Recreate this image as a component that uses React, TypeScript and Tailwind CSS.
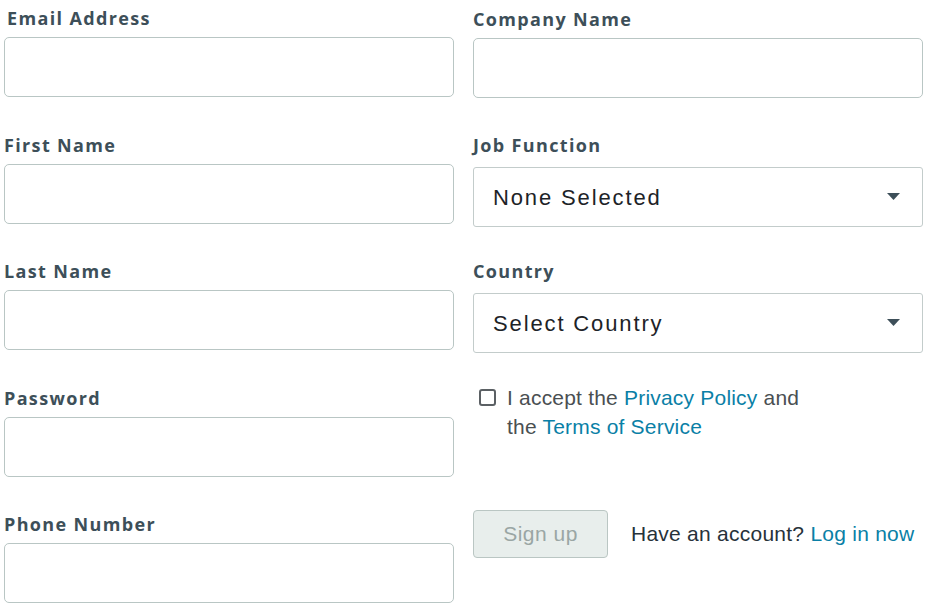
import React from "react";

const labelCls =
  "block text-[18px] leading-[26px] font-bold text-[#3d4f59] tracking-[0.075em]";
const inputCls =
  "block w-full h-[60px] rounded-[5px] border border-[#b9c6c4] bg-white";
const labelFont = { fontFamily: "'Open Sans', Lato, sans-serif" };

function Field({ label, className = "" }: { label: string; className?: string }) {
  return (
    <div className={className}>
      <label className={labelCls} style={labelFont}>
        {label}
      </label>
      <div className={"mt-[6px] " + inputCls} />
    </div>
  );
}

function SelectField({ label, value, className = "" }: { label: string; value: string; className?: string }) {
  return (
    <div className={className}>
      <label className={labelCls} style={labelFont}>
        {label}
      </label>
      <div className="mt-[9px] flex h-[60px] w-full items-center justify-between rounded-[3px] border border-[#c3cccb] bg-white pl-[19px] pr-[22px]">
        <span className="text-[22px] tracking-[0.085em] text-[#1d2327]" style={{ fontFamily: "'Liberation Sans', Arial, sans-serif" }}>
          {value}
        </span>
        <svg width="13" height="8" viewBox="0 0 13 8">
          <path d="M0 0 H13 L6.5 7 Z" fill="#3d4f59" />
        </svg>
      </div>
    </div>
  );
}

export default function App() {
  const body = { fontFamily: "'Liberation Sans', Arial, sans-serif" };
  return (
    <div className="w-[932px] h-[614px] bg-white overflow-hidden">
      <div className="grid grid-cols-[450px_450px] gap-x-[19px] pl-[4px] pt-[5px]">
        <div className="flex flex-col gap-[34.5px]">
          <Field label="Email Address" className="[&>label]:pl-[3px]" />
          <Field label="First Name" />
          <Field label="Last Name" />
          <Field label="Password" />
          <Field label="Phone Number" />
        </div>
        <div className="flex flex-col">
          <Field label="Company Name" className="pt-[1px]" />
          <SelectField label="Job Function" value="None Selected" className="mt-[34px]" />
          <SelectField label="Country" value="Select Country" className="mt-[31px]" />
          <div className="mt-[30px] flex items-start gap-[11px] pl-[6px] text-[21px] leading-[29px] tracking-[0.2px] text-[#4a4f52]" style={body}>
            <span className="mt-[6px] block h-[17px] w-[17px] shrink-0 rounded-[3px] border-2 border-[#5b6064]" />
            <p>
              I accept the <a className="text-[#0a7fa6]">Privacy Policy</a> and
              <br />
              the <a className="text-[#0a7fa6]">Terms of Service</a>
            </p>
          </div>
          <div className="mt-[69px] flex items-center gap-[23px]" style={body}>
            <button className="h-[48px] w-[135px] rounded-[4px] border border-[#bac6c3] bg-[#e8eeec] text-[21px] tracking-[0.5px] text-[#9aa6a4]">
              Sign up
            </button>
            <span className="text-[21px] tracking-[0.25px] text-[#27323a]">
              Have an account? <a className="text-[#0a7fa6]">Log in now</a>
            </span>
          </div>
        </div>
      </div>
    </div>
  );
}
